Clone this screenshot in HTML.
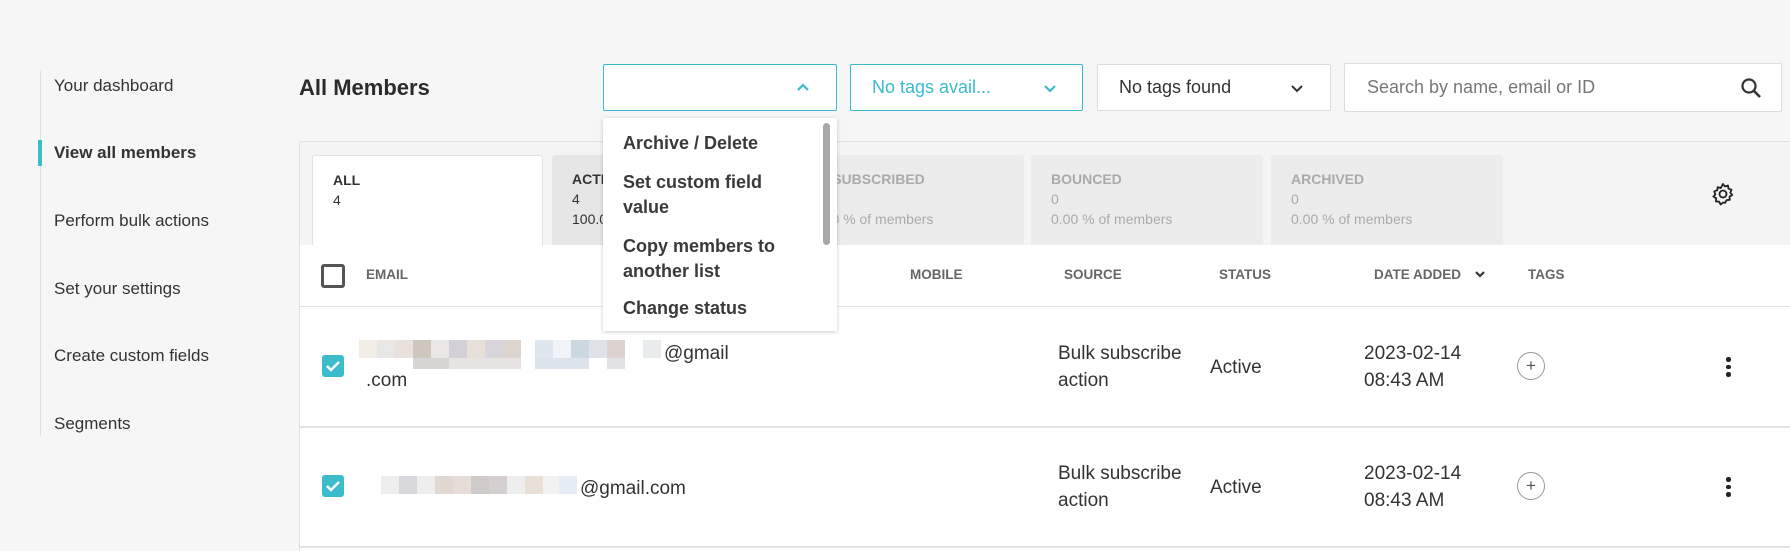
<!DOCTYPE html>
<html><head><meta charset="utf-8"><style>
*{box-sizing:border-box;margin:0;padding:0}
body{width:1790px;height:551px;background:#f6f6f6;font-family:"Liberation Sans",sans-serif;color:#333;position:relative;overflow:hidden}
.a{position:absolute;white-space:nowrap}
.nav{position:absolute;left:54px;font-size:17px;color:#333}
.dd{position:absolute;top:64px;height:47px;background:#fff;border:1px solid #ddd;border-radius:2px}
.tab{position:absolute;top:155px;height:90px;width:232px;background:#ececec;border-radius:3px 3px 0 0;padding:14px 0 0 20px;font-size:14px;color:#aaa;line-height:20px}
.tab b{font-size:14px}
.th{position:absolute;top:267px;font-size:13.5px;font-weight:bold;color:#666}
.cell{position:absolute;font-size:19px;line-height:27px;color:#333}
.cb{position:absolute;left:322px;width:22px;height:22px;border-radius:3px;background:#3bbccb}
.plus{position:absolute;left:1517px;width:28px;height:28px;border:1px solid #999;border-radius:50%;text-align:center;line-height:25px;font-size:17px;color:#555}
.keb{position:absolute;left:1726px;width:5px}
.keb i{display:block;width:4.5px;height:4.5px;border-radius:50%;background:#222;margin-bottom:3px}
.px{position:absolute;height:18px;width:18px}
</style></head><body>
<div class="a" style="left:40px;top:71px;width:1px;height:365px;background:#ddd"></div>
<div class="a" style="left:38px;top:140px;width:4px;height:26px;background:#3bbccb"></div>
<div class="nav" style="top:76px">Your dashboard</div>
<div class="nav" style="top:143px;font-weight:bold">View all members</div>
<div class="nav" style="top:211px">Perform bulk actions</div>
<div class="nav" style="top:279px">Set your settings</div>
<div class="nav" style="top:346px">Create custom fields</div>
<div class="nav" style="top:414px">Segments</div>
<div class="a" style="left:299px;top:75px;font-size:22px;font-weight:bold;color:#2b2b2b">All Members</div>

<div class="dd" style="left:603px;width:234px;border-color:#3bbccb"><svg class="a" style="left:192px;top:18px" width="14" height="9" viewBox="0 0 14 9"><path d="M2 7L7 2L12 7" stroke="#3bbccb" stroke-width="2.2" fill="none"/></svg></div>
<div class="dd" style="left:850px;width:233px;border-color:#3bbccb"><span class="a" style="left:21px;top:12px;font-size:18px;color:#3bbccb">No tags avail...</span><svg class="a" style="left:192px;top:19px" width="14" height="9" viewBox="0 0 14 9"><path d="M2 2L7 7L12 2" stroke="#3bbccb" stroke-width="2.2" fill="none"/></svg></div>
<div class="dd" style="left:1097px;width:234px"><span class="a" style="left:21px;top:12px;font-size:18px;color:#333">No tags found</span><svg class="a" style="left:192px;top:19px" width="14" height="9" viewBox="0 0 14 9"><path d="M2 2L7 7L12 2" stroke="#333" stroke-width="2" fill="none"/></svg></div>
<div class="dd" style="left:1344px;width:438px;top:63px;height:49px"><span class="a" style="left:22px;top:13px;font-size:18px;color:#777">Search by name, email or ID</span><svg class="a" style="left:395px;top:13px" width="22" height="22" viewBox="0 0 22 22"><circle cx="9" cy="9" r="6.5" stroke="#333" stroke-width="2.2" fill="none"/><path d="M14 14L20 20" stroke="#333" stroke-width="2.6"/></svg></div>

<div class="a" style="left:299px;top:141px;width:1500px;height:410px;background:#f4f4f4;border:1px solid #e2e2e2"></div>
<div class="tab" style="left:312px;width:231px;background:#fff;border:1px solid #e2e2e2;border-bottom:none;color:#333"><b>ALL</b><br>4</div>
<div class="tab" style="left:552px;background:#e6e6e6;color:#333"><b>ACTIVE</b><br>4<br>100.00 % of members</div>
<div class="tab" style="left:792px"><b>UNSUBSCRIBED</b><br>0<br>0.00 % of members</div>
<div class="tab" style="left:1031px"><b>BOUNCED</b><br>0<br>0.00 % of members</div>
<div class="tab" style="left:1271px"><b>ARCHIVED</b><br>0<br>0.00 % of members</div>
<svg class="a" style="left:1711px;top:182px" width="24" height="24" viewBox="0 0 24 24"><path d="M12 2l2 2.5 3-1 .5 3.2 3 1-1.2 3 2 2.3-2.8 1.6.3 3.2-3.2.3-1.6 2.8L12 20.5 9.7 22.5 8.1 19.7l-3.2-.3.3-3.2L2.4 14.6l2-2.3-1.2-3 3-1 .5-3.2 3 1z" stroke="#222" stroke-width="1.8" fill="none" stroke-linejoin="round"/><circle cx="12" cy="12" r="3.5" stroke="#222" stroke-width="1.8" fill="none"/></svg>

<div class="a" style="left:300px;top:245px;width:1490px;height:306px;background:#fff"></div>
<div class="a" style="left:300px;top:306px;width:1490px;height:1px;background:#e2e2e2"></div>
<div class="a" style="left:300px;top:426px;width:1490px;height:2px;background:#e2e2e2"></div>
<div class="a" style="left:300px;top:546px;width:1490px;height:2px;background:#e2e2e2"></div>
<div class="a" style="left:321px;top:264px;width:24px;height:24px;border:3px solid #555;border-radius:3px"></div>
<div class="th" style="left:366px">EMAIL</div>
<div class="th" style="left:910px">MOBILE</div>
<div class="th" style="left:1064px">SOURCE</div>
<div class="th" style="left:1219px">STATUS</div>
<div class="th" style="left:1374px">DATE ADDED</div>
<svg class="a" style="left:1474px;top:270px" width="12" height="9" viewBox="0 0 12 9"><path d="M2 2L6 6L10 2" stroke="#333" stroke-width="2.2" fill="none"/></svg>
<div class="th" style="left:1528px">TAGS</div>

<div class="cb" style="top:355px"><svg width="22" height="22"><path d="M5 11l4 4 8-8" stroke="#fff" stroke-width="2.5" fill="none"/></svg></div>
<div class="a" style="left:359px;top:340px;width:300px;height:30px">
<div class="px" style="left:0;background:#f2ece6"></div><div class="px" style="left:18px;background:#e9e7e6"></div><div class="px" style="left:36px;background:#e9e1dc"></div><div class="px" style="left:54px;background:#cec7be"></div><div class="px" style="left:72px;background:#e9e7e6"></div><div class="px" style="left:90px;background:#d3d0d8"></div><div class="px" style="left:108px;background:#e8dfd8"></div><div class="px" style="left:126px;background:#d8d5dc"></div><div class="px" style="left:144px;background:#ddd5d0"></div>
<div class="px" style="left:176px;background:#e0e6ed"></div><div class="px" style="left:194px;background:#f0f3f7"></div><div class="px" style="left:212px;background:#ccd8e0"></div><div class="px" style="left:230px;background:#dfe2e8"></div><div class="px" style="left:248px;background:#dcd3d0"></div><div class="px" style="left:284px;background:#e8ecec"></div>
<div class="px" style="top:18px;left:54px;height:11px;width:36px;background:#d8d6d4"></div><div class="px" style="top:18px;left:90px;height:11px;width:72px;background:#e8e4e4"></div><div class="px" style="top:18px;left:176px;height:11px;width:54px;background:#dde3ea"></div><div class="px" style="top:18px;left:248px;height:11px;width:18px;background:#e2e2e4"></div>
</div>
<div class="cell" style="left:664px;top:340px">@gmail</div>
<div class="cell" style="left:366px;top:367px">.com</div>
<div class="cell" style="left:1058px;top:340px">Bulk subscribe<br>action</div>
<div class="cell" style="left:1210px;top:354px">Active</div>
<div class="cell" style="left:1364px;top:340px">2023-02-14<br>08:43 AM</div>
<div class="plus" style="top:352px">+</div>
<div class="keb" style="top:357px"><i></i><i></i><i></i></div>

<div class="cb" style="top:475px"><svg width="22" height="22"><path d="M5 11l4 4 8-8" stroke="#fff" stroke-width="2.5" fill="none"/></svg></div>
<div class="a" style="left:381px;top:476px;width:195px;height:30px">
<div class="px" style="left:0;background:#eeeeee"></div><div class="px" style="left:18px;background:#d8d8dc"></div><div class="px" style="left:36px;background:#eeeeee"></div><div class="px" style="left:54px;background:#e2d8d2"></div><div class="px" style="left:72px;background:#e6ddd8"></div><div class="px" style="left:90px;background:#cfcbca"></div><div class="px" style="left:108px;background:#d5cfcf"></div><div class="px" style="left:126px;background:#eeeeee"></div><div class="px" style="left:144px;background:#e9e1d8"></div><div class="px" style="left:162px;background:#f2f2f2"></div><div class="px" style="left:178px;background:#e6edf4"></div>
</div>
<div class="cell" style="left:580px;top:475px">@gmail.com</div>
<div class="cell" style="left:1058px;top:460px">Bulk subscribe<br>action</div>
<div class="cell" style="left:1210px;top:474px">Active</div>
<div class="cell" style="left:1364px;top:460px">2023-02-14<br>08:43 AM</div>
<div class="plus" style="top:472px">+</div>
<div class="keb" style="top:477px"><i></i><i></i><i></i></div>

<div class="a" style="left:603px;top:118px;width:234px;height:213px;background:#fff;box-shadow:0 1px 4px rgba(0,0,0,.2);font-size:18px;font-weight:bold;color:#3a3a3a;line-height:25px">
<div class="a" style="left:20px;top:13px">Archive / Delete</div>
<div class="a" style="left:20px;top:52px">Set custom field<br>value</div>
<div class="a" style="left:20px;top:116px">Copy members to<br>another list</div>
<div class="a" style="left:20px;top:178px">Change status</div>
<div class="a" style="left:220px;top:5px;width:7px;height:122px;border-radius:4px;background:#a8a8a8"></div>
</div>
</body></html>
